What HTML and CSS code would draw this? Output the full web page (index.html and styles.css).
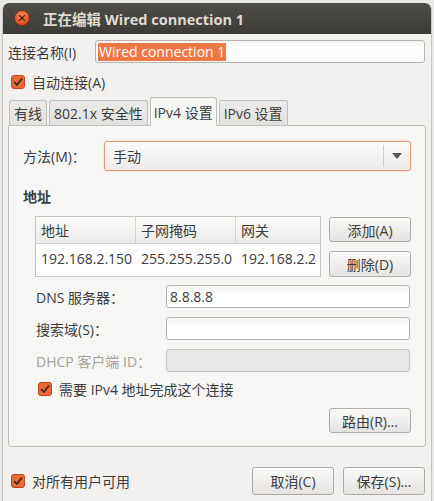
FILE: index.html
```html
<!DOCTYPE html>
<html>
<head>
<meta charset="utf-8">
<link rel="stylesheet" href="styles.css">
</head>
<body>
<div class="window">
  <div class="titlebar">
    <span class="close">
      <svg width="16" height="16" viewBox="0 0 16 16"><defs><radialGradient id="cg" cx="50%" cy="35%" r="60%"><stop offset="0" stop-color="#f88a5c"/><stop offset="1" stop-color="#d9491a"/></radialGradient></defs><circle cx="8" cy="8" r="7.5" fill="url(#cg)" stroke="#6a2a10" stroke-width="0.6"/><path d="M5.6 5.6 L10.4 10.4 M10.4 5.6 L5.6 10.4" stroke="#3a1a0c" stroke-width="1.3" stroke-linecap="round"/></svg>
    </span>
    <span class="title">正在编辑 Wired connection 1</span>
  </div>
  <div class="content">
    <div class="row-name">
      <label class="name-label">连接名称(I)</label>
      <div class="entry name-entry"><span class="sel">Wired connection 1</span></div>
    </div>
    <div class="check-row auto">
      <span class="cb"><svg width="14" height="14" viewBox="0 0 14 14"><rect x="0.5" y="0.5" width="13" height="13" rx="2.5" fill="#ea6a35" stroke="#b9471c"/><path d="M3.2 7.2 L5.8 10 L11 3.6" fill="none" stroke="#3a2a22" stroke-width="1.8" stroke-linejoin="round"/></svg></span>
      <span>自动连接(A)</span>
    </div>
    <div class="tabs">
      <div class="tab">有线</div>
      <div class="tab">802.1x 安全性</div>
      <div class="tab active">IPv4 设置</div>
      <div class="tab">IPv6 设置</div>
    </div>
    <div class="panel">
      <div class="method-row">
        <span class="method-label">方法(M)：</span>
        <div class="combo">
          <span class="combo-text">手动</span>
          <span class="combo-sep"></span>
          <span class="combo-arrow"></span>
        </div>
      </div>
      <div class="section-title">地址</div>
      <div class="addr-area">
        <div class="table">
          <div class="thead">
            <div class="c1">地址</div>
            <div class="c2">子网掩码</div>
            <div class="c3">网关</div>
          </div>
          <div class="trow">
            <div class="c1">192.168.2.150</div>
            <div class="c2">255.255.255.0</div>
            <div class="c3">192.168.2.2</div>
          </div>
        </div>
        <div class="side-buttons">
          <button class="btn add">添加(A)</button>
          <button class="btn del">删除(D)</button>
        </div>
      </div>
      <div class="form-row first">
        <span class="f-label">DNS 服务器：</span>
        <div class="entry f-entry">8.8.8.8</div>
      </div>
      <div class="form-row">
        <span class="f-label">搜索域(S)：</span>
        <div class="entry f-entry"></div>
      </div>
      <div class="form-row">
        <span class="f-label dim">DHCP 客户端 ID：</span>
        <div class="entry f-entry disabled"></div>
      </div>
      <div class="check-row require">
        <span class="cb"><svg width="14" height="14" viewBox="0 0 14 14"><rect x="0.5" y="0.5" width="13" height="13" rx="2.5" fill="#ea6a35" stroke="#b9471c"/><path d="M3.2 7.2 L5.8 10 L11 3.6" fill="none" stroke="#3a2a22" stroke-width="1.8" stroke-linejoin="round"/></svg></span>
        <span>需要 IPv4 地址完成这个连接</span>
      </div>
      <div class="route-row">
        <button class="btn route">路由(R)…</button>
      </div>
    </div>
    <div class="bottom">
      <div class="check-row all">
        <span class="cb"><svg width="14" height="14" viewBox="0 0 14 14"><rect x="0.5" y="0.5" width="13" height="13" rx="2.5" fill="#ea6a35" stroke="#b9471c"/><path d="M3.2 7.2 L5.8 10 L11 3.6" fill="none" stroke="#3a2a22" stroke-width="1.8" stroke-linejoin="round"/></svg></span>
        <span>对所有用户可用</span>
      </div>
      <div class="bottom-buttons">
        <button class="btn big">取消(C)</button>
        <button class="btn big">保存(S)…</button>
      </div>
    </div>
  </div>
</div>
</body>
</html>
```
FILE: styles.css
```css
* { box-sizing: border-box; }
html, body { margin: 0; padding: 0; }
body {
  width: 434px;
  height: 501px;
  overflow: hidden;
  background: #e9e8e6;
  padding: 3px 2px 0 2px;
  font-family: "Open Sans", "Noto Sans CJK SC", sans-serif;
  font-size: 14px;
  color: #3c3c3c;
}
.window {
  width: 430px;
  height: 498px;
  background: #f2f1f0;
  border-radius: 6px 6px 0 0;
  overflow: hidden;
  border-left: 1px solid #c9c6c1;
  border-right: 1px solid #c9c6c1;
}
.titlebar {
  height: 31px;
  background: linear-gradient(#4f4e49, #3c3b37);
  display: flex;
  align-items: center;
  padding-left: 11px;
  border-radius: 6px 6px 0 0;
}
.close { width: 16px; height: 16px; display: block; margin-top: -1px; }
.close svg { display: block; }
.title {
  margin-left: 13px;
  color: #dfdbd2;
  font-weight: bold;
  font-size: 14.5px;
}
.content { padding: 0 5px 0 5px; }
.row-name {
  display: flex;
  align-items: center;
  margin-top: 6px;
  height: 23px;
}
.name-label { width: 87px; }
.entry {
  border: 1px solid #b7b4af;
  border-radius: 3px;
  background: linear-gradient(#f4f4f3, #ffffff 40%);
  height: 23px;
  display: flex;
  align-items: center;
  padding-left: 2px;
}
.name-entry { flex: 1; margin-right: 1px; }
.sel {
  background: #f07746;
  color: #fff;
  padding: 0 1px;
  line-height: 18px;
}
.check-row {
  display: flex;
  align-items: center;
  height: 18px;
}
.cb { width: 14px; height: 14px; margin-right: 7px; }
.cb svg { display: block; }
.auto { margin-top: 10px; padding-left: 3px; }
.tabs {
  display: flex;
  align-items: flex-end;
  height: 27px;
  margin-top: 7px;
  padding-left: 1px;
  position: relative;
  z-index: 1;
}
.tab {
  height: 25px;
  padding: 0 4px;
  margin-right: 2px;
  background: linear-gradient(#ebeae8, #e2e1df);
  border: 1px solid #c2bfba;
  border-bottom: none;
  border-radius: 3px 3px 0 0;
  display: flex;
  align-items: center;
  color: #3c3c3c;
}
.tab.active {
  height: 29px;
  margin-bottom: -1px;
  background: #f6f6f5;
  padding: 0 3px;
}
.panel {
  border: 1px solid #c2bfba;
  border-radius: 0 3px 3px 3px;
  background: #f6f6f5;
  height: 322px;
  padding: 15px 14px 0 14px;
}
.method-row { display: flex; align-items: center; height: 30px; }
.method-label { width: 81px; }
.combo {
  flex: 1;
  height: 30px;
  border: 1px solid #e69a7a;
  border-radius: 3px;
  background: linear-gradient(#fbfbfa, #ecebe9);
  display: flex;
  align-items: center;
  padding-left: 8px;
  box-shadow: 0 0 0 1px rgba(240,140,100,0.15);
}
.combo-text { flex: 1; }
.combo-sep { width: 1px; height: 22px; background: #cfccc7; margin-right: 8px; }
.combo-arrow {
  width: 0; height: 0;
  border-left: 5px solid transparent;
  border-right: 5px solid transparent;
  border-top: 6px solid #555;
  margin-right: 8px;
}
.section-title {
  font-weight: bold;
  margin-top: 18px;
  height: 16px;
  line-height: 16px;
}
.addr-area {
  display: flex;
  margin-top: 11px;
  padding-left: 12px;
}
.table {
  width: 286px;
  height: 61px;
  border: 1px solid #c7c4bf;
  background: #fff;
}
.thead {
  display: flex;
  height: 27px;
  background: linear-gradient(#fbfbfa, #ecebe9);
  border-bottom: 1px solid #d3d0cb;
}
.thead > div {
  display: flex;
  align-items: center;
  padding-left: 5px;
  border-right: 1px solid #d3d0cb;
}
.thead > div:last-child { border-right: none; }
.trow { display: flex; height: 28px; align-items: center; }
.trow > div { padding-left: 5px; white-space: nowrap; }
.c1 { width: 100px; }
.c2 { width: 100px; }
.c3 { flex: 1; }
.side-buttons {
  display: flex;
  flex-direction: column;
  margin-left: 8px;
  padding-top: 1px;
}
.btn {
  font-family: "Open Sans", "Noto Sans CJK SC", sans-serif;
  font-size: 14px;
  color: #3c3c3c;
  border: 1px solid #aeaba6;
  border-radius: 3px;
  background: linear-gradient(#fafaf9, #e4e3e1);
  width: 82px;
  height: 25px;
  padding: 0;
  display: flex;
  align-items: center;
  justify-content: center;
  box-shadow: 0 1px 0 rgba(255,255,255,0.6) inset;
}
.btn.del { margin-top: 9px; height: 26px; }
.form-row {
  display: flex;
  align-items: center;
  height: 23px;
  margin-top: 9px;
  padding-left: 13px;
}
.form-row.first { margin-top: 8px; }
.f-label { width: 130px; }
.f-label.dim { color: #a4a19c; }
.f-entry { width: 244px; padding-left: 3px; }
.f-entry.disabled { background: #e8e7e5; border-color: #c8c5c0; }
.require { margin-top: 8px; padding-left: 15px; height: 18px; }
.route-row {
  display: flex;
  justify-content: flex-end;
  margin-top: 10px;
}
.bottom {
  display: flex;
  align-items: center;
  justify-content: space-between;
  margin-top: 20px;
}
.all { padding-left: 3px; }
.bottom-buttons { display: flex; gap: 9px; margin-right: 1px; }
.btn.big { width: 82px; height: 28px; }
```
